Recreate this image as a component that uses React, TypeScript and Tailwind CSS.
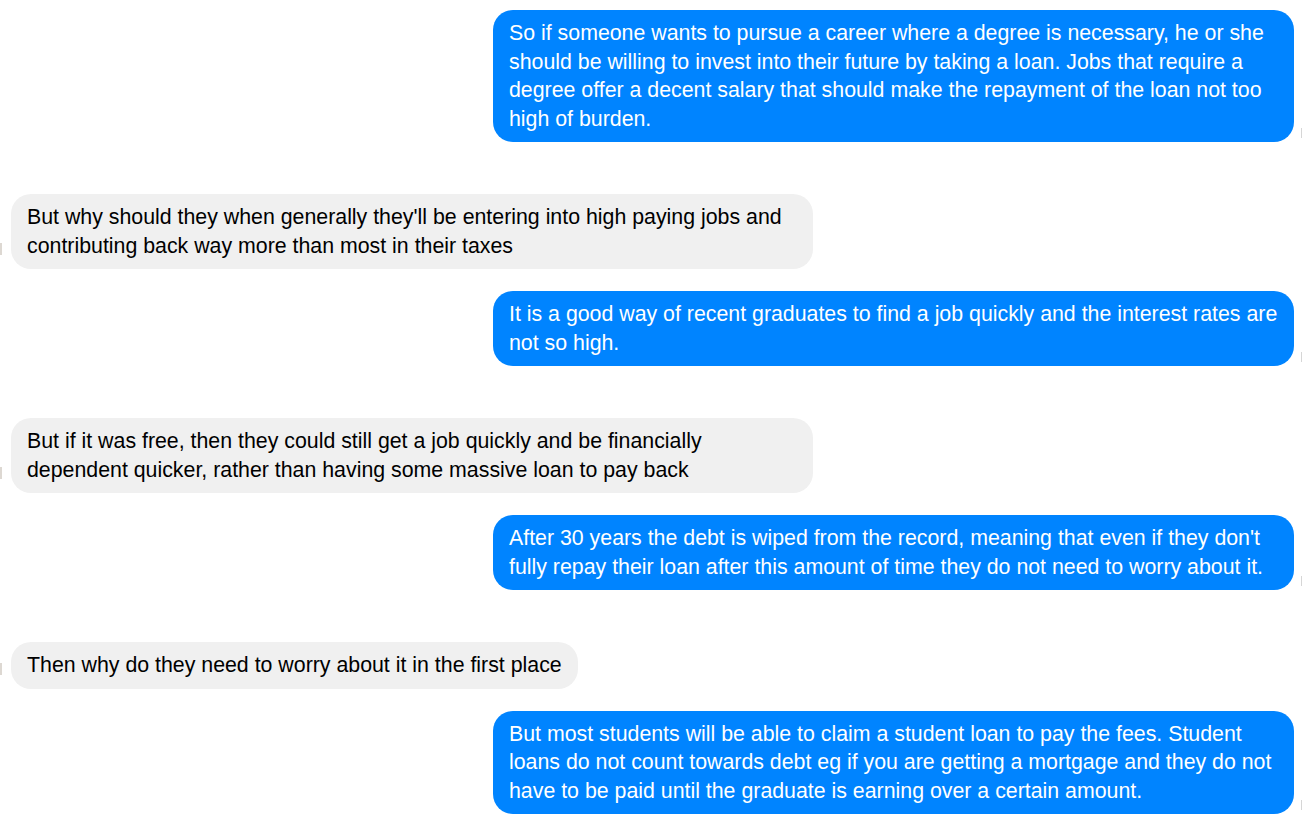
const messages: { from: "me" | "them"; text: string }[] = [
  {
    from: "me",
    text: "So if someone wants to pursue a career where a degree is necessary, he or she should be willing to invest into their future by taking a loan. Jobs that require a degree offer a decent salary that should make the repayment of the loan not too high of burden.",
  },
  {
    from: "them",
    text: "But why should they when generally they'll be entering into high paying jobs and contributing back way more than most in their taxes",
  },
  {
    from: "me",
    text: "It is a good way of recent graduates to find a job quickly and the interest rates are not so high.",
  },
  {
    from: "them",
    text: "But if it was free, then they could still get a job quickly and be financially dependent quicker, rather than having some massive loan to pay back",
  },
  {
    from: "me",
    text: "After 30 years the debt is wiped from the record, meaning that even if they don't fully repay their loan after this amount of time they do not need to worry about it.",
  },
  {
    from: "them",
    text: "Then why do they need to worry about it in the first place",
  },
  {
    from: "me",
    text: "But most students will be able to claim a student loan to pay the fees. Student loans do not count towards debt eg if you are getting a mortgage and they do not have to be paid until the graduate is earning over a certain amount.",
  },
];

function Bubble({ from, text }: { from: "me" | "them"; text: string }) {
  if (from === "me") {
    return (
      <div className="relative flex justify-end pr-[8px] mb-[30px]">
        <div className="max-w-[801px] rounded-[20px] bg-[#0084ff] px-[16px] py-[9px] text-[21.33px] leading-[28.5px] text-white">
          {text}
        </div>
        <span className="absolute right-0 bottom-[4px] h-[10px] w-[1px] bg-[#d6d6d6]" />
      </div>
    );
  }
  return (
    <div className="relative flex justify-start pl-[11px]">
      <div className="max-w-[802px] rounded-[20px] bg-[#f0f0f0] px-[16px] py-[9px] text-[21.33px] leading-[28.5px] text-black">
        {text}
      </div>
      <span className="absolute left-0 bottom-[14px] h-[12px] w-[2px] bg-[#ddd8d2]" />
    </div>
  );
}

export default function App() {
  return (
    <div
      className="min-h-screen bg-white pt-[10px] flex flex-col gap-[22px] overflow-hidden"
      style={{ fontFamily: '"Liberation Sans", Arial, sans-serif' }}
    >
      {messages.map((m, i) => (
        <Bubble key={i} from={m.from} text={m.text} />
      ))}
    </div>
  );
}
